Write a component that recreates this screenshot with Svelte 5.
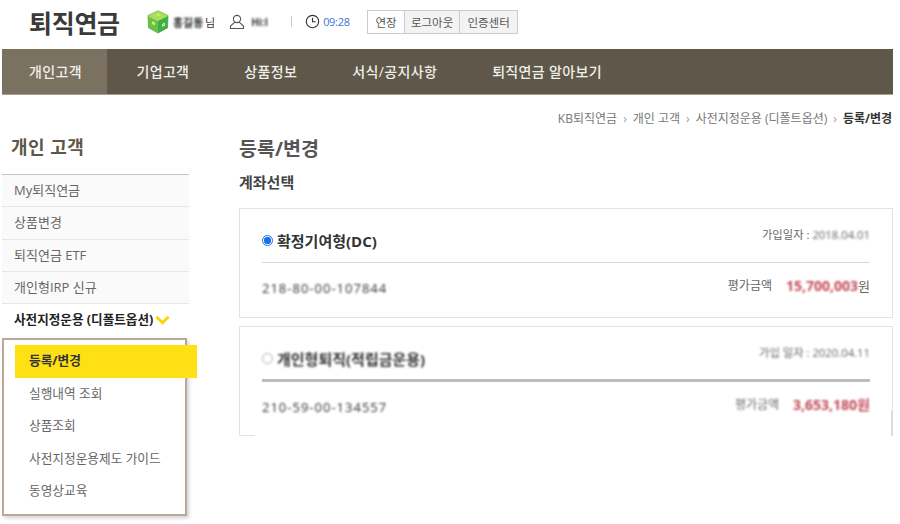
<script>
  const navItems = ['개인고객', '기업고객', '상품정보', '서식/공지사항', '퇴직연금 알아보기'];
  const sideItems = ['My퇴직연금', '상품변경', '퇴직연금 ETF', '개인형IRP 신규'];
  const subItems = ['등록/변경', '실행내역 조회', '상품조회', '사전지정운용제도 가이드', '동영상교육'];
  const crumbs = ['KB퇴직연금', '개인 고객', '사전지정운용 (디폴트옵션)'];
</script>

<div class="page">
  <header class="top">
    <div class="logo">퇴직연금</div>
    <svg class="cube" viewBox="0 0 24 24" width="24" height="24" stroke-linejoin="round">
      <path d="M12 1.5 21.5 6 21 17.5 12 22.5 3 17.5 2.5 6Z" fill="#6cc04a" stroke="#6cc04a" stroke-width="2" />
      <path d="M12 1.5 21.5 6 12 11 2.5 6Z" fill="#a8e05e" stroke="#a8e05e" />
      <path d="M12 11 22 6 21.5 18 12 23Z" fill="#3fae4c" />
      <path d="M6 11l3 1.5v3l-3-1.5zM16 14l3-1.5v3l-3 1.5zM10 4.5l3-1 2 1.5-3 1z" fill="#c4ee7c" />
    </svg>
    <span class="blur name">홍길동</span><span class="nim">님</span>
    <svg class="user" viewBox="0 0 16 16" width="16" height="16" fill="none" stroke="#555" stroke-width="1.1">
      <circle cx="8" cy="5" r="3.6" />
      <path d="M5.8 8.2 1.5 12v2.5h13V12L10.2 8.2" />
    </svg>
    <span class="blur uid">Hi:I</span>
    <span class="sep"></span>
    <svg class="clock" viewBox="0 0 16 16" width="15" height="15" fill="none" stroke="#333" stroke-width="1.2">
      <circle cx="8" cy="8" r="6.6" />
      <path d="M8 4v4.3h3.4" />
    </svg>
    <span class="time">09:28</span>
    <div class="btns">
      <button class="first">연장</button>
      <button>로그아웃</button>
      <button class="last">인증센터</button>
    </div>
  </header>

  <nav class="gnb">
    {#each navItems as item, i}
      <a class:on={i === 0} href="#top">{item}</a>
    {/each}
  </nav>

  <div class="crumbs">
    {#each crumbs as c}
      <span>{c}</span><i>›</i>
    {/each}
    <b>등록/변경</b>
  </div>

  <div class="body">
    <aside class="side">
      <h2>개인 고객</h2>
      <ul class="menu">
        {#each sideItems as item}
          <li>{item}</li>
        {/each}
        <li class="open">
          사전지정운용 (디폴트옵션)
          <svg viewBox="0 0 16 10" width="15" height="10" fill="none" stroke="#ffd400" stroke-width="3">
            <path d="M1.5 1.5 8 8l6.5-6.5" />
          </svg>
        </li>
      </ul>
      <ul class="sub">
        {#each subItems as item, i}
          <li class:sel={i === 0}>{item}</li>
        {/each}
      </ul>
    </aside>

    <main class="content">
      <h1>등록/변경</h1>
      <h3>계좌선택</h3>

      <section class="card">
        <div class="row head">
          <label><span class="radio on"></span><strong>확정기여형(DC)</strong></label>
          <span class="date">가입일자 : <span class="blur">2018.04.01</span></span>
        </div>
        <div class="row foot">
          <span class="acct blur soft">218-80-00-107844</span>
          <span class="amt">평가금액<em class="blur">15,700,003</em><span class="won">원</span></span>
        </div>
      </section>

      <section class="card second">
        <div class="row head thick">
          <label class="blur soft"><span class="radio"></span><strong>개인형퇴직(적립금운용)</strong></label>
          <span class="date blur">가입 일자 : 2020.04.11</span>
        </div>
        <div class="row foot">
          <span class="acct blur soft">210-59-00-134557</span>
          <span class="amt low"><span class="blur">평가금액</span><em class="blur">3,653,180원</em></span>
        </div>
      </section>
    </main>
  </div>
</div>

<style>
  :global(body) {
    background: #fff;
    font-family: "Open Sans", "Noto Sans CJK KR", sans-serif;
    color: #333;
  }
  .page {
    width: 900px;
    height: 524px;
    overflow: hidden;
  }
  .top {
    height: 49px;
    display: flex;
    align-items: center;
    padding: 0 0 6px 29px;
    box-sizing: border-box;
    font-size: 12px;
  }
  .logo {
    font-size: 25px;
    font-weight: 700;
    color: #3a3a38;
    width: 117px;
    letter-spacing: -0.3px;
  }
  .blur {
    filter: blur(1px);
  }
  .soft {
    filter: blur(0.9px);
  }
  .name {
    margin-left: 3px;
    color: #222;
    font-weight: 700;
    font-size: 11px;
    width: 32px;
  }
  .nim {
    color: #333;
    font-size: 11px;
  }
  .user {
    margin-left: 14px;
  }
  .uid {
    margin-left: 6px;
    width: 28px;
    color: #333;
    font-size: 10px;
    font-weight: 700;
  }
  .sep {
    width: 1px;
    height: 11px;
    background: #ccc;
    margin-left: 12px;
  }
  .clock {
    margin-left: 13px;
  }
  .time {
    margin-left: 3px;
    color: #3b72d9;
    font-size: 11px;
    width: 44px;
    letter-spacing: -0.3px;
  }
  .btns {
    display: flex;
  }
  .btns button {
    height: 24px;
    padding: 0;
    width: 55px;
    border: 1px solid #ccc;
    border-left: none;
    background: #f3f3f3;
    color: #555;
    font: 11.5px "Noto Sans CJK KR", sans-serif;
  }
  .btns .first {
    width: 38px;
    border-left: 1px solid #ccc;
    background: #fff;
  }
  .btns .last {
    width: 58px;
  }
  .gnb {
    margin-left: 2px;
    width: 891px;
    height: 45px;
    display: flex;
    align-items: stretch;
    background: #5f584a;
    border-bottom: 1px solid #a79f92;
  }
  .gnb a {
    color: #f1efe9;
    font-size: 14px;
    font-weight: 500;
    letter-spacing: 0.35px;
    text-decoration: none;
    display: flex;
    align-items: center;
    padding: 0 27.5px 2px;
  }
  .gnb a.on {
    background: #7a7161;
    padding: 0 25px 2px 27px;
    margin-right: 2px;
  }
  .crumbs {
    display: flex;
    justify-content: flex-end;
    align-items: center;
    height: 44px;
    padding: 2px 8px 0 0;
    box-sizing: border-box;
    font-size: 12px;
    color: #777;
  }
  .crumbs i {
    font-style: normal;
    margin: 0 6px;
    color: #999;
  }
  .crumbs b {
    color: #333;
    font-weight: 700;
  }
  .body {
    display: flex;
    align-items: flex-start;
    margin-left: 2px;
  }
  .side {
    width: 187px;
  }
  .side h2 {
    margin: -4px 0 0 9px;
    height: 39px;
    font-size: 18px;
    font-weight: 700;
    color: #5e5648;
    line-height: 24px;
    letter-spacing: 0.5px;
  }
  .menu {
    list-style: none;
    margin: 0;
    padding: 0;
    border-top: 1px solid #cbc3b5;
  }
  .menu li {
    height: 32.3px;
    box-sizing: border-box;
    padding-left: 12px;
    line-height: 30px;
    font-size: 13px;
    color: #666;
    background: #fafafa;
    border-bottom: 1px solid #e6e6e6;
  }
  .menu li.open {
    background: #fff;
    border: none;
    color: #222;
    font-weight: 700;
    font-size: 12.6px;
    display: flex;
    align-items: center;
    gap: 2px;
  }
  .sub {
    list-style: none;
    margin: 2px 0 0;
    padding: 5px 0 0 11px;
    width: 185px;
    height: 178px;
    box-sizing: border-box;
    border: 2px solid #b9a898;
    box-shadow: 2px 2px 4px rgba(0, 0, 0, 0.18);
    background: #fff;
  }
  .sub li {
    height: 32.5px;
    line-height: 31px;
    padding-left: 14px;
    font-size: 12.7px;
    color: #666;
  }
  .sub li.sel {
    width: 182px;
    box-sizing: border-box;
    background: #ffe015;
    color: #333;
    font-weight: 700;
  }
  .content {
    width: 654px;
    margin-left: 50px;
  }
  .content h1 {
    margin: -3px 0 0;
    font-size: 19.5px;
    font-weight: 700;
    color: #555;
    line-height: 26px;
  }
  .content h3 {
    margin: 10px 0 16px;
    font-size: 15px;
    font-weight: 700;
    color: #444;
    line-height: 20px;
  }
  .card {
    border: 1px solid #e3e3e3;
    height: 110px;
    padding: 0 22px;
    margin-bottom: 8px;
    box-sizing: border-box;
    position: relative;
  }
  .card.second {
    height: 110px;
    border-bottom: none;
  }
  .card.second::after {
    content: "";
    position: absolute;
    right: -1px;
    bottom: 0;
    width: 2px;
    height: 25px;
    background: #ddd;
  }
  .card.second::before {
    content: "";
    position: absolute;
    left: -1px;
    bottom: 0;
    width: 16px;
    height: 1px;
    background: #e3e3e3;
  }
  .row {
    display: flex;
    justify-content: space-between;
    position: relative;
  }
  .head {
    height: 54px;
    border-bottom: 1px solid #d8d8d8;
    box-sizing: border-box;
  }
  .thick {
    height: 55px;
    border-bottom: 3px solid #bdbdbd;
  }
  .foot {
    height: 50px;
    align-items: center;
    font-size: 12px;
    color: #555;
  }
  label {
    display: flex;
    align-items: center;
    font-size: 15px;
    color: #333;
    height: 24px;
    margin-top: 19px;
  }
  strong {
    font-weight: 700;
  }
  .radio {
    width: 11px;
    height: 11px;
    border-radius: 50%;
    border: 1px solid #aaa;
    margin-right: 4px;
    box-sizing: border-box;
    background: #fff;
  }
  .radio.on {
    border-color: #1a73e8;
    background: radial-gradient(circle, #1a73e8 55%, #fff 60%);
  }
  .date {
    font-size: 11.3px;
    color: #666;
    margin-top: 16px;
    height: 20px;
    line-height: 20px;
  }
  .acct {
    font-size: 13px;
    letter-spacing: 1px;
    color: #333;
  }
  .amt {
    font-size: 12px;
    color: #666;
    margin-top: -6px;
    display: flex;
    align-items: center;
  }
  .amt em {
    font-style: normal;
    font-weight: 700;
    font-size: 14px;
    color: #c24a55;
    margin-left: 14px;
  }
  .won {
    font-size: 13px;
  }
  .amt.low {
    margin-top: -6px;
  }
</style>
